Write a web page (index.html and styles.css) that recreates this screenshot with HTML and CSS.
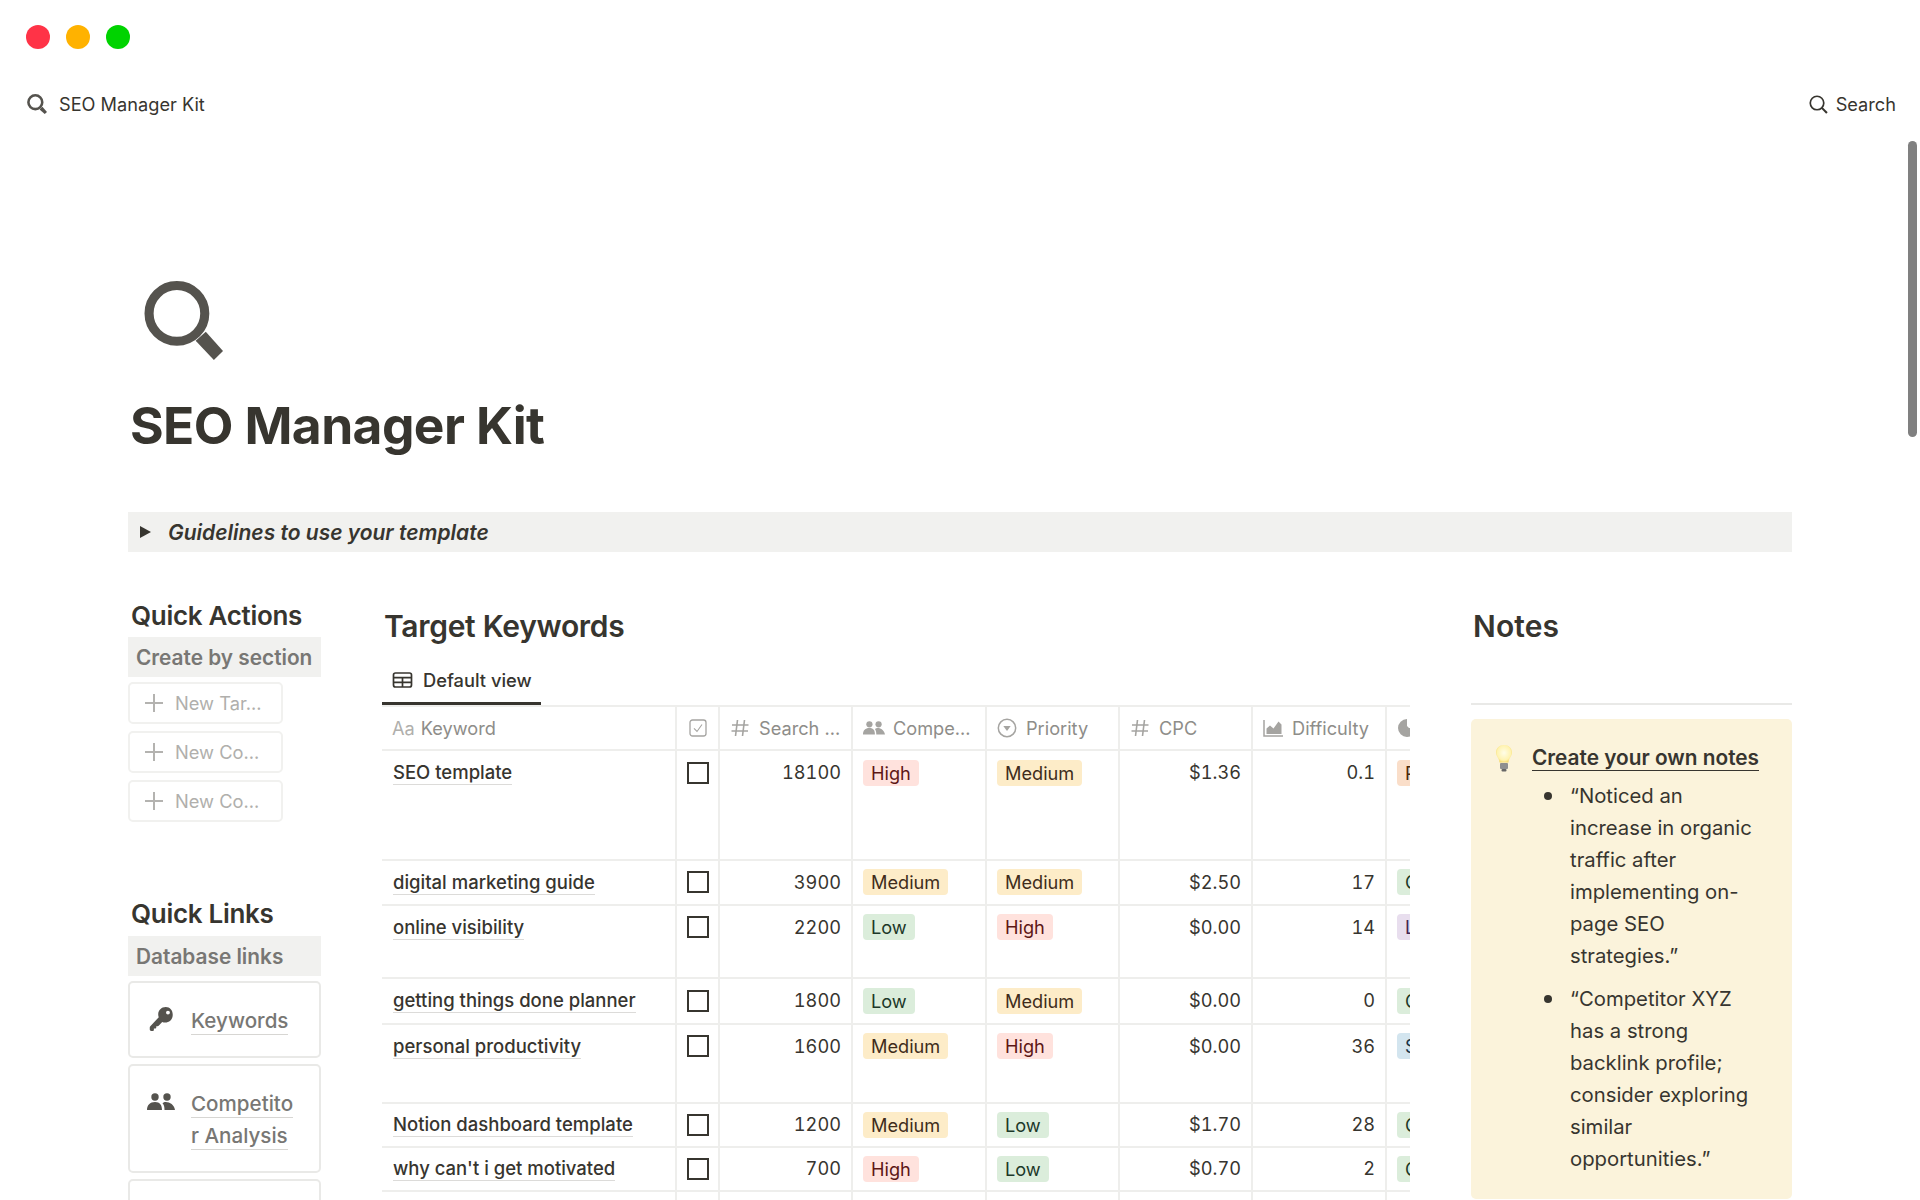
FILE: index.html
```html
<!DOCTYPE html>
<html lang="en">
<head>
<meta charset="utf-8">
<title>SEO Manager Kit</title>
<link rel="stylesheet" href="styles.css">
</head>
<body>
<div class="lights"><span class="light red"></span><span class="light amber"></span><span class="light green"></span></div>
<header class="topbar">
  <div class="crumb">
    <svg class="crumb-icon" viewBox="0 0 78 78"><circle cx="32.5" cy="32" r="27" fill="none" stroke="#55534e" stroke-width="10"/><polygon points="49,60 60,50 78,70 69,78" fill="#55534e"/></svg>
    <span>SEO Manager Kit</span>
  </div>
  <div class="search">
    <svg class="search-icon" viewBox="0 0 18 18"><circle cx="7.6" cy="7.6" r="6.4" fill="none" stroke="#37352f" stroke-width="1.6"/><path d="M12.2 12.2 17 17" stroke="#37352f" stroke-width="2" fill="none"/></svg>
    <span>Search</span>
  </div>
</header>
<div class="scrollbar"></div>
<main class="page">
  <svg class="page-icon" viewBox="0 0 78 78"><circle cx="32.5" cy="32" r="27.5" fill="none" stroke="#55534e" stroke-width="9"/><polygon points="51,59 61,50 78,69 69,78" fill="#55534e"/></svg>
  <h1 class="title">SEO Manager Kit</h1>
  <div class="toggle"><span class="tri"></span><span>Guidelines to use your template</span></div>
  <div class="columns">
    <aside class="left">
      <h3 class="side-h">Quick Actions</h3>
      <div class="side-band">Create by section</div>
      <div class="new-btn"><svg class="plus" viewBox="0 0 20 20"><path d="M10 1v18M1 10h18" stroke="#b4b3b0" stroke-width="2"/></svg><span>New Tar...</span></div>
      <div class="new-btn"><svg class="plus" viewBox="0 0 20 20"><path d="M10 1v18M1 10h18" stroke="#b4b3b0" stroke-width="2"/></svg><span>New Co...</span></div>
      <div class="new-btn"><svg class="plus" viewBox="0 0 20 20"><path d="M10 1v18M1 10h18" stroke="#b4b3b0" stroke-width="2"/></svg><span>New Co...</span></div>
      <h3 class="side-h links-h">Quick Links</h3>
      <div class="side-band">Database links</div>
      <div class="link-card card-key">
        <svg class="card-icon" viewBox="0 0 24 24"><path fill="#55534e" d="M15.5 1C11.4 1 8.500 4 8.500 7.800c0 1 .2 1.800.5 2.500L1.200 18.600c-.5.500-.5 1.100-.5 1.600v1.500c0 .8.600 1.300 1.300 1.300h1.600c.5 0 .9-.3.900-.8v-1.400h1.300c.5 0 .9-.4.900-.9v-1.200h1.200c.4 0 .7-.2 1-.4l3.300-3.500c.8.300 1.700.5 2.700.5 4 0 7-3 7-6.900C22 4 19.400 1 15.500 1zm2 3.300a1.800 1.800 0 1 1 0 3.600 1.800 1.800 0 0 1 0-3.600z"/></svg>
        <span class="card-text"><span class="ul">Keywords</span></span>
      </div>
      <div class="link-card card-comp">
        <svg class="card-icon people" viewBox="0 0 28 18"><use href="#people-glyph"/></svg>
        <span class="card-text"><span class="ul">Competito</span><br><span class="ul">r Analysis</span></span>
      </div>
      <div class="link-card"></div>
    </aside>
    <section class="middle">
      <h2 class="block-h">Target Keywords</h2>
      <div class="tabs"><div class="tab">
        <svg class="tab-icon" viewBox="0 0 20 16"><rect x="1" y="1" width="18" height="14" rx="2" fill="none" stroke="#37352f" stroke-width="1.700"/><path d="M1 5.700h18M1 10.300h18M10 5.700V15" stroke="#37352f" stroke-width="1.700" fill="none"/></svg>
        <span>Default view</span>
      </div></div>
      <div class="table-clip">
      <table class="db">
        <colgroup><col class="c-name"><col class="c-check"><col class="c-std"><col class="c-wide"><col class="c-std"><col class="c-std"><col class="c-wide"><col class="c-std"></colgroup>
        <thead><tr>
          <th><span class="hd"><span class="aa">Aa</span><span>Keyword</span></span></th>
          <th class="th-check"><svg class="ic-check" viewBox="0 0 18 18"><rect x="1" y="1" width="16" height="16" rx="2.500" fill="none" stroke="#a5a4a1" stroke-width="1.300"/><path d="M5 9.300 8 12.500 13 5.500" fill="none" stroke="#a5a4a1" stroke-width="1.100"/></svg></th>
          <th><span class="hd"><svg class="hi" viewBox="0 0 20 20"><path d="M7.500 2 5.500 18M14.500 2l-2 16M2 7h16.500M1.500 13h16.500" stroke="#a5a4a1" stroke-width="1.600" fill="none"/></svg><span>Search ...</span></span></th>
          <th><span class="hd"><svg class="hi hi-wide" viewBox="0 0 24 16"><use href="#people-gray"/></svg><span>Compe...</span></span></th>
          <th><span class="hd"><svg class="hi" viewBox="0 0 20 20"><circle cx="10" cy="10" r="8.700" fill="none" stroke="#a5a4a1" stroke-width="1.500"/><path d="M6.300 8h7.400L10 13z" fill="#a5a4a1"/></svg><span>Priority</span></span></th>
          <th><span class="hd"><svg class="hi" viewBox="0 0 20 20"><path d="M7.500 2 5.500 18M14.500 2l-2 16M2 7h16.500M1.500 13h16.500" stroke="#a5a4a1" stroke-width="1.600" fill="none"/></svg><span>CPC</span></span></th>
          <th><span class="hd"><svg class="hi" viewBox="0 0 20 18"><path d="M1 1v16h19" fill="none" stroke="#a5a4a1" stroke-width="1.500"/><path d="M3.500 15V9.500L7 6.500l3.500 3 5-7 3 3V15z" fill="#a5a4a1"/></svg><span>Difficulty</span></span></th>
          <th><span class="hd"><svg class="hi" viewBox="0 0 20 20"><path fill="#a5a4a1" d="M10 1a9 9 0 1 0 9 9h-7l-2-2z"/></svg><span>Intent</span></span></th>
        </tr></thead>
        <tbody>
          <tr class="r110"><td><span class="kw">SEO template</span></td><td class="cb"><span class="box"></span></td><td class="num">18100</td><td><span class="pill high">High</span></td><td><span class="pill med">Medium</span></td><td class="num">$1.36</td><td class="num">0.1</td><td><span class="pill orange">Purchase</span></td></tr>
          <tr class="r45"><td><span class="kw">digital marketing guide</span></td><td class="cb"><span class="box"></span></td><td class="num">3900</td><td><span class="pill med">Medium</span></td><td><span class="pill med">Medium</span></td><td class="num">$2.50</td><td class="num">17</td><td><span class="pill low">Guide</span></td></tr>
          <tr class="r73"><td><span class="kw">online visibility</span></td><td class="cb"><span class="box"></span></td><td class="num">2200</td><td><span class="pill low">Low</span></td><td><span class="pill high">High</span></td><td class="num">$0.00</td><td class="num">14</td><td><span class="pill purple">Learn</span></td></tr>
          <tr class="r46"><td><span class="kw">getting things done planner</span></td><td class="cb"><span class="box"></span></td><td class="num">1800</td><td><span class="pill low">Low</span></td><td><span class="pill med">Medium</span></td><td class="num">$0.00</td><td class="num">0</td><td><span class="pill low">Guide</span></td></tr>
          <tr class="r79"><td><span class="kw">personal productivity</span></td><td class="cb"><span class="box"></span></td><td class="num">1600</td><td><span class="pill med">Medium</span></td><td><span class="pill high">High</span></td><td class="num">$0.00</td><td class="num">36</td><td><span class="pill blue">Study</span></td></tr>
          <tr class="r44"><td><span class="kw">Notion dashboard template</span></td><td class="cb"><span class="box"></span></td><td class="num">1200</td><td><span class="pill med">Medium</span></td><td><span class="pill low">Low</span></td><td class="num">$1.70</td><td class="num">28</td><td><span class="pill low">Guide</span></td></tr>
          <tr class="r44"><td><span class="kw">why can't i get motivated</span></td><td class="cb"><span class="box"></span></td><td class="num">700</td><td><span class="pill high">High</span></td><td><span class="pill low">Low</span></td><td class="num">$0.70</td><td class="num">2</td><td><span class="pill low">Guide</span></td></tr>
          <tr class="r44"><td></td><td class="cb"></td><td class="num"></td><td><span class="pill low">Low</span></td><td><span class="pill med">Medium</span></td><td class="num"></td><td class="num"></td><td><span class="pill orange">Purchase</span></td></tr>
        </tbody>
      </table>
      </div>
    </section>
    <aside class="right">
      <h2 class="block-h notes-h">Notes</h2>
      <hr class="rule">
      <div class="callout">
        <svg class="bulb" viewBox="0 0 18 28"><defs><radialGradient id="bg" cx=".5" cy=".45" r=".6"><stop offset="0" stop-color="#fffde8"/><stop offset=".7" stop-color="#fff3b0"/><stop offset="1" stop-color="#f3d35a"/></radialGradient></defs><path d="M9 1C4.300 1 1 4.400 1 8.500c0 3.700 3 5.500 3.600 10h8.800C14 14 17 12.200 17 8.500 17 4.400 13.700 1 9 1z" fill="url(#bg)"/><rect x="5" y="19" width="8" height="6" rx="1" fill="#8f8f8f"/><rect x="6.500" y="25" width="5" height="2.500" rx="1" fill="#666"/></svg>
        <div class="callout-body">
          <div class="callout-title"><span class="strong-ul">Create your own notes</span></div>
          <ul class="notes">
            <li><span>“Noticed an increase in organic traffic after implementing on-page SEO strategies.”</span></li>
            <li><span>“Competitor XYZ has a strong backlink profile; consider exploring similar opportunities.”</span></li>
          </ul>
        </div>
      </div>
    </aside>
  </div>
</main>
<svg class="defs" width="0" height="0"><defs>
  <g id="people-glyph" fill="#55534e"><circle cx="8" cy="4" r="3.700"/><circle cx="20" cy="4" r="3.700"/><path d="M0 17c0-5 3-8 8-8s7 3 7 8zM17 9.200c5-.8 10 2 11 7.800H17.500c0-3-.5-5.500-2-6.700z"/></g>
  <g id="people-gray" fill="#a5a4a1"><circle cx="7" cy="4" r="3.400"/><circle cx="17" cy="4" r="3.400"/><path d="M0 15c0-4.500 2.500-7 7-7s6 2.500 6 7zM14.500 8.200c4.500-.8 8.500 2 9.500 6.800h-9.500c0-2.500-.5-5-1.500-6z"/></g>
</defs></svg>
</body>
</html>
```
FILE: styles.css
```css
* { box-sizing: border-box; }
html, body { margin: 0; height: 1200px; overflow: hidden; background: #fff; }
body { font-family: Inter, "Liberation Sans", sans-serif; color: #37352f; position: relative; }
.defs { position: absolute; }
.lights { display: flex; gap: 16px; padding: 25px 0 0 26px; height: 49px; }
.light { width: 24px; height: 24px; border-radius: 50%; }
.red { background: #ff3347; }
.amber { background: #ffb200; }
.green { background: #00d300; }
.topbar { display: flex; justify-content: space-between; align-items: center; height: 40px; margin-top: 35px; padding: 0 24px 0 27px; font-size: 18.200px; }
.crumb, .search { display: flex; align-items: center; }
.crumb-icon { width: 20px; height: 20px; margin-right: 12px; }
.search-icon { width: 19px; height: 19px; margin-right: 8px; }
.scrollbar { position: absolute; left: 1908px; top: 141px; width: 9px; height: 296px; border-radius: 5px; background: #808080; }
.page { height: 1076px; overflow: hidden; padding: 0 128px; }
.page-icon { display: block; width: 79px; height: 79px; margin: 157px 0 0 16px; }
.title { margin: 34px 0 0 2px; font-size: 51.500px; line-height: 62px; font-weight: 700; letter-spacing: -0.6px; }
.toggle { display: flex; align-items: center; height: 40px; margin-top: 56px; padding-left: 12px; background: #f1f1ef; font-size: 21px; font-weight: 600; font-style: italic; }
.tri { width: 0; height: 0; margin-right: 17px; border-left: 11px solid #37352f; border-top: 6px solid transparent; border-bottom: 6px solid transparent; }
.columns { display: grid; grid-template-columns: 193px 1028px 321px; column-gap: 61px; margin-top: -1px; }
.left { padding-top: 44px; }
.side-h { margin: 0 0 0 3px; font-size: 26px; line-height: 42px; font-weight: 600; letter-spacing: -0.3px; }
.links-h { margin-top: 69px; line-height: 45px; }
.side-band { display: flex; align-items: center; height: 40px; margin-bottom: 5px; padding-left: 8px; background: #f1f1ef; color: #787774; font-size: 20.800px; font-weight: 600; white-space: nowrap; }
.new-btn { display: flex; align-items: center; width: 155px; height: 42px; margin-bottom: 7px; padding-left: 14px; border: 2px solid #f1f1ef; border-radius: 5px; color: #b0afac; font-size: 18.300px; }
.plus { width: 20px; height: 20px; margin-right: 11px; }
.link-card { display: flex; align-items: flex-start; margin-bottom: 6px; border: 2px solid #e9e9e7; border-radius: 5px; height: 77px; padding: 20px 0 0 19px; color: #787774; font-size: 20.600px; line-height: 32px; font-weight: 500; }
.card-key { padding-top: 22px; }
.card-comp { height: 109px; padding-top: 22px; }
.link-card:last-child { height: 80px; }
.card-icon { flex: none; width: 26px; height: 26px; margin: 1px 16px 0 0; }
.people { width: 28px; height: 18px; margin: 5px 16px 0 -2px; }
.card-text { display: block; }
.ul { border-bottom: 1px solid #d7d6d3; padding-bottom: 1px; }
.middle { min-width: 0; padding-top: 55px; }
.block-h { margin: 0 0 0 2px; font-size: 30px; line-height: 40px; font-weight: 600; letter-spacing: -0.3px; }
.tabs { margin-top: 15px; }
.tab { display: flex; align-items: center; width: 159px; height: 44px; padding: 0 0 4px 10px; border-bottom: 3px solid #37352f; font-size: 18.300px; font-weight: 500; }
.tab-icon { width: 21px; height: 16px; margin-right: 10px; }
.table-clip { overflow: hidden; }
.db { table-layout: fixed; border-collapse: collapse; width: 1138px; font-size: 18.200px; }
.c-name { width: 294px; }
.c-check { width: 43px; }
.c-std { width: 133px; }
.c-wide { width: 134px; }
.db thead tr { height: 44px; }
.db th, .db td { border: 2px solid #eeeeec; padding: 0 10px; text-align: left; vertical-align: top; }
.db th:first-child, .db td:first-child { border-left: 0; }
.db th { vertical-align: middle; font-weight: 400; color: #8e8d89; }
.hd { display: flex; align-items: center; white-space: nowrap; }
.hi { flex: none; width: 20px; height: 20px; margin-right: 9px; }
.hi-wide { width: 22px; margin-right: 8px; }
.aa { color: #b0afac; margin-right: 6px; }
.th-check { text-align: center; }
.ic-check { display: block; width: 18px; height: 18px; margin: 0 auto; }
.db td { padding-top: 9px; line-height: 24px; white-space: nowrap; overflow: hidden; }
.db td:first-child { padding-left: 11px; }
.r110 { height: 110px; }
.r45 { height: 45px; }
.r46 { height: 46px; }
.r73 { height: 73px; }
.r79 { height: 79px; }
.r44 { height: 44px; }
.db .r44 td { padding-top: 8px; }
.kw { font-size: 18.500px; font-weight: 500; border-bottom: 1px solid #dcdbd9; padding-bottom: 1px; }
.db td.cb { padding: 11px 0 0; }
.db .r44 td.cb { padding-top: 10px; }
.box { display: block; width: 22px; height: 22px; margin: 0 auto; border: 2px solid #37352f; }
.db td.num { text-align: right; font-variant-numeric: tabular-nums; padding-right: 10px; }
.pill { display: inline-block; height: 26px; padding: 0 8px; border-radius: 4px; line-height: 26px; vertical-align: top; }
.r45 .pill, .r73 .pill, .r79 .pill { margin-top: -1px; }
.r45 .box, .r73 .box, .r79 .box { margin-top: -1px; }
.high { background: #ffe2dd; color: #5d1715; }
.med { background: #fdecc8; color: #402c1b; }
.low { background: #dbeddb; color: #1c3829; }
.orange { background: #fadec9; color: #49290e; }
.purple { background: #e8deee; color: #412454; }
.blue { background: #d3e5ef; color: #183347; }
.notes-h { letter-spacing: 0.1px; }
.right { padding-top: 55px; }
.rule { height: 2px; margin: 57px 0 14px; border: 0; background: #e9e9e7; }
.callout { display: flex; height: 480px; padding: 25px 32px 0 24px; border-radius: 5px; background: #fbf3db; }
.bulb { flex: none; width: 18px; height: 28px; margin-right: 19px; }
.callout-body { min-width: 0; }
.callout-title { font-size: 20.800px; line-height: 28px; font-weight: 600; white-space: nowrap; }
.strong-ul { border-bottom: 1px solid #37352f; }
.notes { margin: 8px 0 0; padding: 0 0 0 12px; font-size: 20.300px; line-height: 32px; list-style: none; }
.notes li { display: flex; margin-bottom: 11px; }
.notes li::before { content: ""; flex: none; width: 8px; height: 8px; margin: 12px 18px 0 0; border-radius: 50%; background: #37352f; }
```
